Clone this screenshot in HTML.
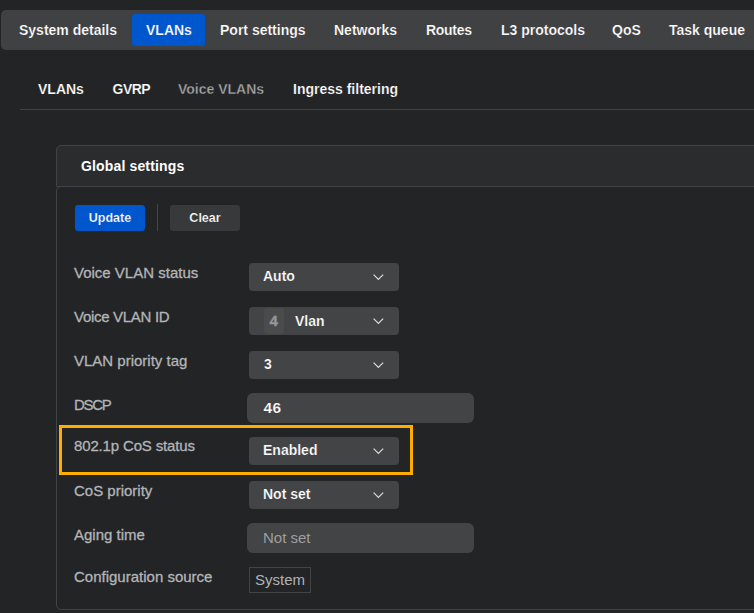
<!DOCTYPE html>
<html><head><meta charset="utf-8">
<style>
html,body{margin:0;padding:0;}
body{width:754px;height:613px;overflow:hidden;background:#232426;font-family:"Liberation Sans",sans-serif;position:relative;color:#fff;}
.a{position:absolute;white-space:nowrap;}
.tabbar{left:1px;top:10px;width:780px;height:40px;background:#404143;border-radius:5px;}
.tab{top:0;height:40px;line-height:40px;font-size:14px;font-weight:bold;color:#fff;-webkit-text-stroke:0.2px #404143;}
.active{left:132px;top:14px;width:73px;height:32px;background:#0056cc;border-radius:3px;}
.sub{font-size:14px;font-weight:bold;color:#fff;top:80px;line-height:18px;-webkit-text-stroke:0.2px #232426;}
.subline{left:20px;top:109px;width:740px;height:1px;background:#404143;}
.card{left:56px;top:186px;width:720px;height:422px;border:1px solid #424345;border-radius:5px;}
.head{left:56px;top:145px;width:720px;height:40px;background:#2b2c2e;border:1px solid #424345;border-radius:5px 5px 0 0;}
.title{left:81px;top:157px;font-size:14px;font-weight:bold;line-height:18px;letter-spacing:0.15px;}
.btn{height:26px;line-height:26px;border-radius:3px;text-align:center;font-size:12.5px;font-weight:bold;width:70px;}
.lbl{left:74px;font-size:15px;color:#b3b5b8;line-height:18px;-webkit-text-stroke:0.3px #b3b5b8;}
.sel{left:249px;width:150px;height:28px;background:#434446;border-radius:4px;}
.val{font-size:14px;font-weight:bold;color:#fff;line-height:18px;-webkit-text-stroke:0.2px #434446;}
.chev{position:absolute;left:124px;top:11px;}
.inp{left:247px;width:227px;height:30px;background:#434446;border-radius:6px;}
</style></head><body>
<div class="a tabbar"></div>
<div class="a active"></div>
<div class="a tab" style="left:19px;top:10px">System details</div>
<div class="a tab" style="left:146px;top:10px;-webkit-text-stroke-color:#0056cc">VLANs</div>
<div class="a tab" style="left:220px;top:10px">Port settings</div>
<div class="a tab" style="left:334px;top:10px">Networks</div>
<div class="a tab" style="left:426px;top:10px;letter-spacing:-0.3px">Routes</div>
<div class="a tab" style="left:501px;top:10px">L3 protocols</div>
<div class="a tab" style="left:612px;top:10px">QoS</div>
<div class="a tab" style="left:669px;top:10px">Task queue</div>

<div class="a sub" style="left:38px">VLANs</div>
<div class="a sub" style="left:112.5px;letter-spacing:-0.5px">GVRP</div>
<div class="a sub" style="left:178px;color:#a5a6a9;-webkit-text-stroke:0.3px #232426">Voice VLANs</div>
<div class="a sub" style="left:293px">Ingress filtering</div>
<div class="a subline"></div>

<div class="a card"></div>
<div class="a head"></div>
<div class="a title">Global settings</div>

<div class="a btn" style="left:75px;top:205px;background:#0056cc;-webkit-text-stroke:0.2px #0056cc">Update</div>
<div class="a" style="left:157px;top:204px;width:1px;height:27px;background:#444547"></div>
<div class="a btn" style="left:170px;top:205px;background:#38393b;-webkit-text-stroke:0.2px #38393b">Clear</div>

<div class="a lbl" style="top:264px">Voice VLAN status</div>
<div class="a lbl" style="top:308px;letter-spacing:-0.3px">Voice VLAN ID</div>
<div class="a lbl" style="top:352px">VLAN priority tag</div>
<div class="a lbl" style="top:396px;letter-spacing:-1.3px">DSCP</div>
<div class="a lbl" style="top:437px;letter-spacing:-0.15px">802.1p CoS status</div>
<div class="a lbl" style="top:482px">CoS priority</div>
<div class="a lbl" style="top:525.5px">Aging time</div>
<div class="a lbl" style="top:568px">Configuration source</div>

<div class="a sel" style="top:263px">
  <div class="a val" style="left:14px;top:4px">Auto</div>
  <svg class="chev" width="12" height="8" viewBox="0 0 12 8"><path d="M0.6 0.6 L5.4 5.4 L10.2 0.6" fill="none" stroke="#d6d6d6" stroke-width="1.3"/></svg>
</div>
<div class="a sel" style="top:307px">
  <div class="a" style="left:15px;top:1px;width:20px;height:26px;background:#4a4b4d;border-radius:3px"></div>
  <div class="a val" style="left:20.5px;top:4.5px;color:#959698;font-size:15px;-webkit-text-stroke:0.4px #959698">4</div>
  <div class="a val" style="left:46px;top:4.5px">Vlan</div>
  <svg class="chev" width="12" height="8" viewBox="0 0 12 8"><path d="M0.6 0.6 L5.4 5.4 L10.2 0.6" fill="none" stroke="#d6d6d6" stroke-width="1.3"/></svg>
</div>
<div class="a sel" style="top:351px">
  <div class="a val" style="left:15px;top:3.5px">3</div>
  <svg class="chev" width="12" height="8" viewBox="0 0 12 8"><path d="M0.6 0.6 L5.4 5.4 L10.2 0.6" fill="none" stroke="#d6d6d6" stroke-width="1.3"/></svg>
</div>
<div class="a inp" style="top:393px">
  <div class="a val" style="left:16.5px;top:5.5px;font-size:15.5px;letter-spacing:0.4px">46</div>
</div>
<div class="a" style="left:59px;top:425px;width:348px;height:44px;border:3px solid #ffae00"></div>
<div class="a sel" style="top:437px">
  <div class="a val" style="left:14px;top:4px">Enabled</div>
  <svg class="chev" width="12" height="8" viewBox="0 0 12 8"><path d="M0.6 0.6 L5.4 5.4 L10.2 0.6" fill="none" stroke="#d6d6d6" stroke-width="1.3"/></svg>
</div>
<div class="a sel" style="top:481px">
  <div class="a val" style="left:14px;top:4px">Not set</div>
  <svg class="chev" width="12" height="8" viewBox="0 0 12 8"><path d="M0.6 0.6 L5.4 5.4 L10.2 0.6" fill="none" stroke="#d6d6d6" stroke-width="1.3"/></svg>
</div>
<div class="a inp" style="top:523px">
  <div class="a" style="left:16px;top:6px;font-size:15px;line-height:18px;color:#9d9ea1">Not set</div>
</div>
<div class="a" style="left:249px;top:567px;width:60px;height:24px;border:1px solid #434446;">
  <div class="a" style="left:5px;top:3px;font-size:15px;line-height:18px;color:#b0b2b5">System</div>
</div>
</body></html>
